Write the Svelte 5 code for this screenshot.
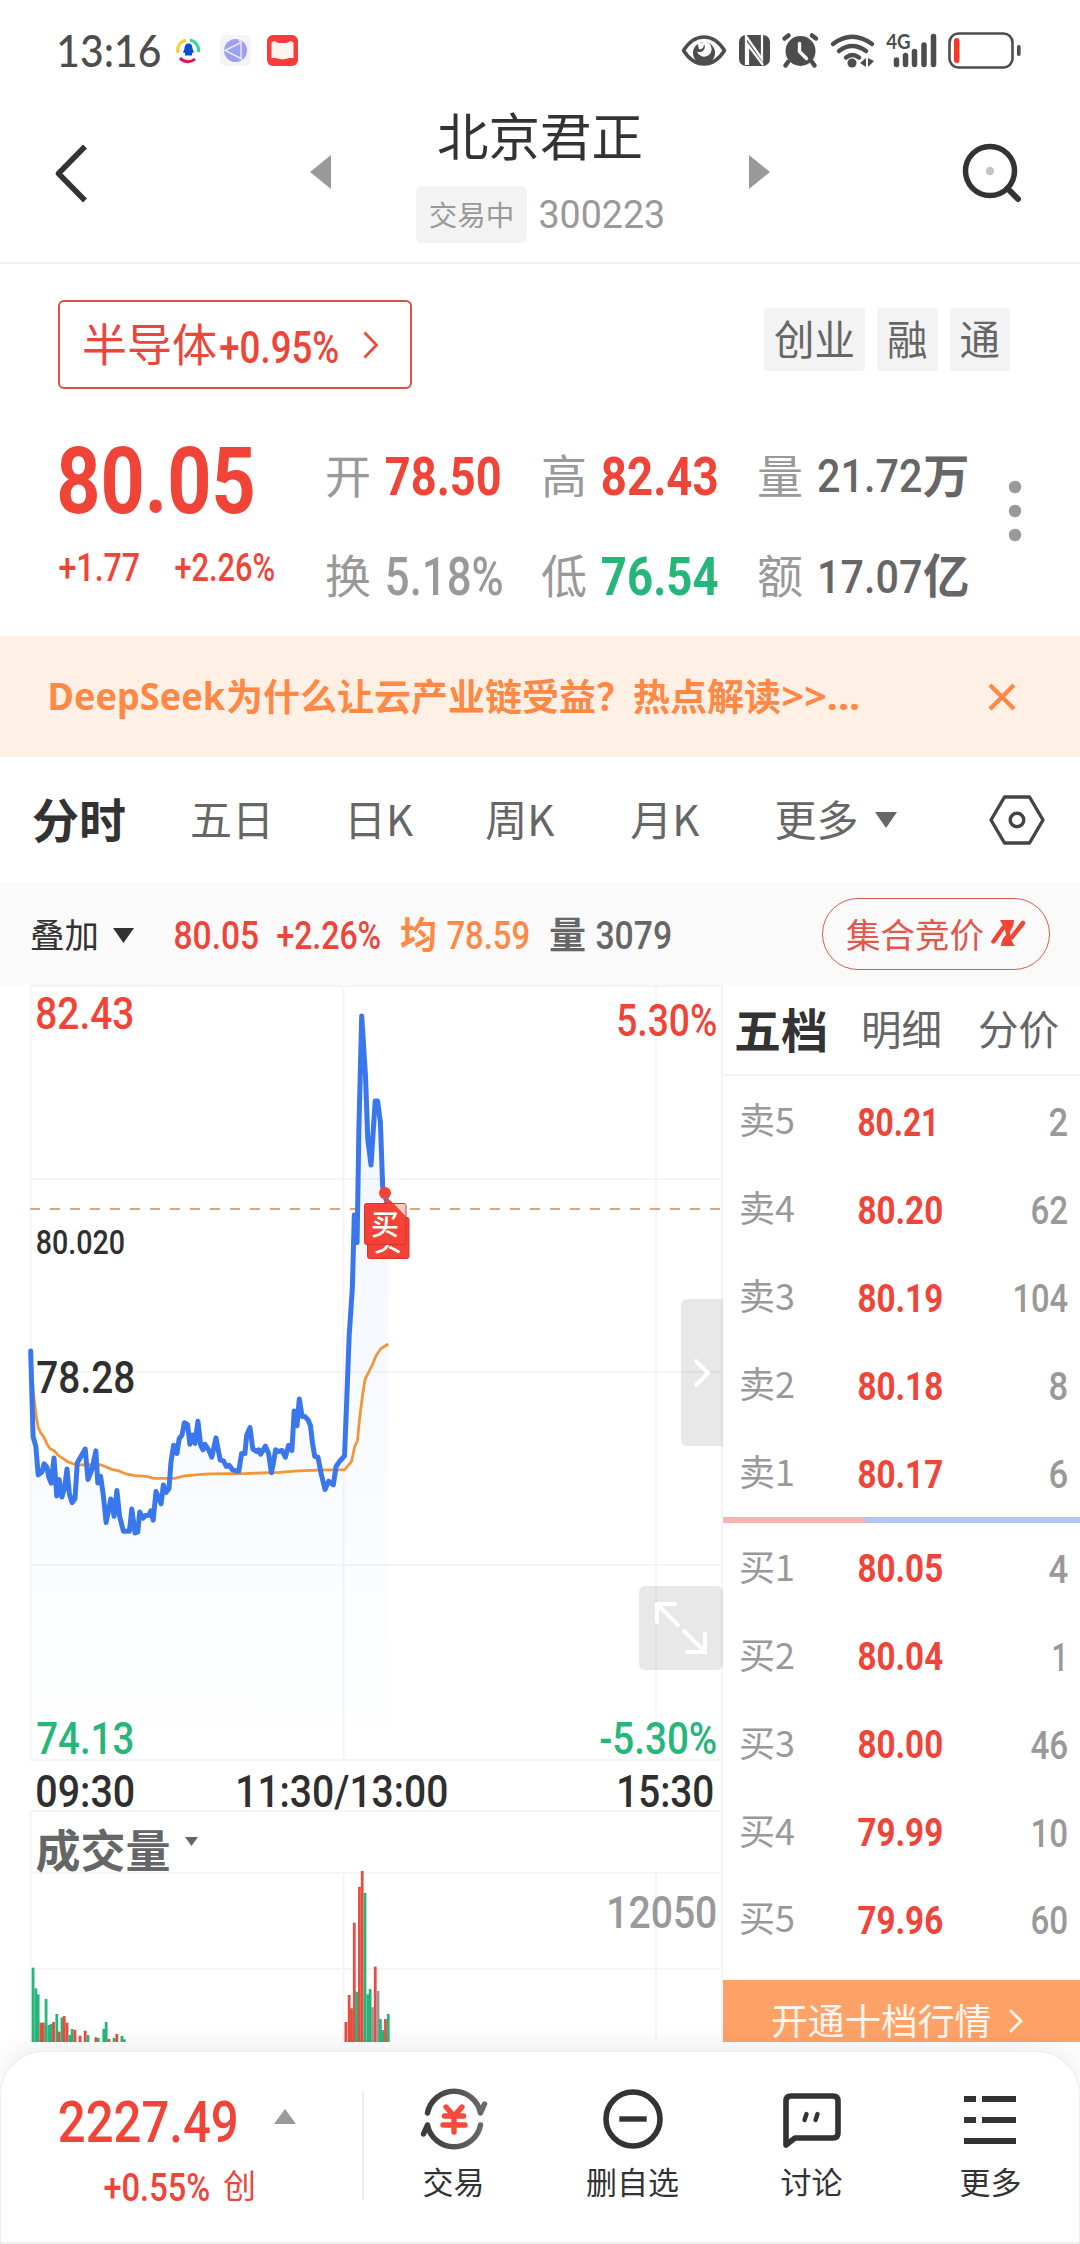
<!-- App.svelte: intraday quote screen -->
<script>
    const stats = [
        { label: '开', value: '78.50', unit: '', tone: 'up', bold: true, w: 113, h: 39 },
        { label: '高', value: '82.43', unit: '', tone: 'up', bold: true, w: 114, h: 39 },
        { label: '量', value: '21.72', unit: '万', tone: 'dark', bold: false, w: 102, h: 34 },
        { label: '换', value: '5.18%', unit: '', tone: 'muted', bold: false, w: 115, h: 39 },
        { label: '低', value: '76.54', unit: '', tone: 'down', bold: true, w: 114, h: 39 },
        { label: '额', value: '17.07', unit: '亿', tone: 'dark', bold: false, w: 102, h: 34 }
    ];

    const sells = [
        ['卖5', '80.21', '2'],
        ['卖4', '80.20', '62'],
        ['卖3', '80.19', '104'],
        ['卖2', '80.18', '8'],
        ['卖1', '80.17', '6']
    ];
    const buys = [
        ['买1', '80.05', '4'],
        ['买2', '80.04', '1'],
        ['买3', '80.00', '46'],
        ['买4', '79.99', '10'],
        ['买5', '79.96', '60']
    ];

    // minute samples: x and level pairs
    const priceRaw =
        '66,1003 71,1235 77,1260 82,1338 90,1330 95,1308 101,1318 105,1345 110,1360 116,1292 122,1395 127,1350 133,1398 139,1370 144,1322 149,1390 155,1413 161,1402 166,1305 173,1290 183,1268 189,1350 197,1325 206,1273 210,1360 216,1342 222,1395 228,1467 238,1403 245,1450 251,1380 257,1450 265,1490 278,1490 283,1430 290,1495 296,1492 300,1438 307,1455 312,1448 320,1447 324,1435 329,1460 335,1383 346,1416 351,1365 357,1385 363,1375 367,1305 373,1258 380,1280 385,1240 391,1230 396,1197 403,1202 408,1255 413,1230 419,1253 425,1193 431,1258 436,1270 440,1255 448,1270 455,1290 464,1238 473,1298 480,1300 486,1315 492,1312 500,1325 513,1328 519,1280 526,1280 530,1230 537,1210 543,1268 552,1275 556,1270 560,1282 570,1260 577,1280 583,1332 588,1300 592,1270 598,1275 606,1272 613,1290 620,1258 627,1272 632,1165 638,1205 643,1133 649,1180 655,1180 662,1190 667,1205 671,1250 676,1288 683,1290 690,1335 698,1377 706,1355 716,1365 722,1315 730,1300 740,1287 744,1160 750,960 757,830 761,635 767,710 771,400 777,97 785,260 790,430 797,500 806,327 811,327 817,385 822,560 828,590 834,605';
    const avgRaw =
        '70,1090 73,1130 78,1180 82,1210 88,1225 94,1235 101,1255 108,1268 116,1272 125,1285 135,1293 145,1302 157,1308 172,1311 215,1310 227,1316 240,1323 255,1327 270,1335 290,1340 315,1342 330,1347 375,1347 395,1341 420,1338 450,1335 530,1334 600,1331 640,1327 700,1324 740,1324 755,1302 762,1262 768,1245 772,1190 778,1130 784,1080 792,1060 800,1040 808,1015 818,997 834,984';

    // r = up, g = down, n = flat
    const volumeRaw =
        'g71,1253 g77,1315 g82,1333 r88,1418 r93,1418 g99,1347 g105,1425 g110,1422 r115,1416 g122,1392 r127,1445 g133,1402 r138,1398 r144,1418 g150,1455 g155,1437 r161,1440 r172,1457 r183,1442 g189,1455 r206,1462 g211,1464 g223,1437 g228,1416 r234,1467 g245,1464 r251,1452 g262,1458 g267,1468 r743,1416 r750,1335 r755,1375 r761,1118 g766,1325 r772,1011 r778,963 g784,1029 g790,1333 g795,1317 n800,1372 r806,1250 n812,1323 g817,1407 g822,1440 r828,1407 g834,1392';

    const SX = 2.148;

    function toPoints(raw) {
        return raw
            .split(' ')
            .map((pair) => {
                const [x, y] = pair.split(',').map(Number);
                return `${(x / SX).toFixed(1)},${(y / 2.7034 - 5).toFixed(1)}`;
            })
            .join(' ');
    }

    const pricePoints = toPoints(priceRaw);
    const avgPoints = toPoints(avgRaw);
    const areaPoints = `${pricePoints} 388,775 30.5,775`;

    const volumeBars = volumeRaw.split(' ').map((item) => {
        const [x, y] = item.slice(1).split(',').map(Number);
        return { kind: item[0], x: x / SX - 1.4, y: 565 + y / 3 };
    });
</script>

<!-- figures in a condensed face: w and h are the visible size of the string -->
{#snippet figure(text, x, y, w, h, cls)}
    {@const size = h / 0.725}
    <text class={cls} x={x - size * 0.04} {y} font-size={size} textLength={w + size * 0.07} lengthAdjust="spacingAndGlyphs">{text}</text>
{/snippet}

<!-- same, but x is the right edge -->
{#snippet figureEnd(text, x, y, w, h, cls)}
    {@const size = h / 0.725}
    <text class={cls} x={x + size * 0.03} {y} font-size={size} text-anchor="end" textLength={w + size * 0.07} lengthAdjust="spacingAndGlyphs">{text}</text>
{/snippet}

{#snippet num(text, w, h, cls)}
    <svg class="num" width={w} height={h}>{@render figure(text, 0, h - 0.5, w, h, cls)}</svg>
{/snippet}

{#snippet bookRow(row)}
    <div class="book-row">
        <span class="book-label">{row[0]}</span>
        {@render num(row[1], row[1].endsWith('1') ? 79 : 83, 28, 'up bold')}
        <span class="book-volume">{@render num(row[2], row[2] === '1' ? 14 : row[2].length * 18 - 1, 28, 'muted')}</span>
    </div>
{/snippet}

<div class="screen">
    <div class="status-bar">
        {@render num('13:16', 102, 32, 'clock')}
        <svg class="apps" width="128" height="40" viewBox="174 31 128 40">
            <g fill="none" stroke-width="3">
                <path d="M178 53a10.500 10.500 0 0 1 8-13" stroke="#f5cf3a" />
                <path d="M190 40a10.500 10.500 0 0 1 8.500 12" stroke="#3ecf9e" />
                <path d="M180 58a10.500 10.500 0 0 0 15 1" stroke="#e0124f" />
            </g>
            <path d="M188.500 43.500c3 0 4 2.500 4 5l1.500 4-2 .5v2.500h-7V53l-2-.5 1.500-4c0-2.500 1-5 4-5z" fill="#0a4fd0" />
            <rect x="220" y="35" width="31" height="31" rx="6" fill="#f4f4f6" />
            <circle cx="235.500" cy="50.500" r="11.500" fill="#9f9ff4" />
            <path d="M225 50.500l16-8v16zM241 42.500l-2-3M241 58.500l1 2" fill="none" stroke="#e9ecff" stroke-width="1.400" />
            <rect x="267" y="35" width="31" height="31" rx="6" fill="#fb3a3c" />
            <path d="M271.500 42.500l3-1.500 4 2h8l4-2 3 1.500v15.500h-4l-7 1.500-7-1.500h-4z" fill="#fff3ee" />
        </svg>
        <svg class="system" width="350" height="50" viewBox="678 26 350 50">
            <g fill="none" stroke="#4d4d4d" stroke-width="3.600" stroke-linecap="round" stroke-linejoin="round">
                <path d="M683.500 50.500Q692 37 704 37t20.500 13.500Q716 64 704 64t-20.500-13.500z" />
                <path d="M784.500 38.500l4-3M812 35.500l4 3M788 62l-2.500 3.500M812 62l2.500 3.500" stroke-width="4.500" />
                <path d="M833 44q19-14.500 39 0M839 51q13-10 27 0M846 57.500q6.500-5 13 0" stroke-width="4.500" />
                <path d="M896.500 60v4.500M905.500 55.500v9M914.500 51.500v13M924 45v19.500M933.500 36.500v28" stroke-width="5.500" />
            </g>
            <circle cx="704" cy="53" r="11" fill="#4d4d4d" />
            <path d="M702 42a7.500 7.500 0 1 1-5 9.500a5 5 0 0 0 5-9.500z" fill="#fff" />
            <path d="M699 49q5 1 5-6l-7-1z" fill="#fff" />
            <rect x="739" y="35" width="31" height="31" rx="7" fill="#4d4d4d" />
            <path d="M746 65V36l16 23V35M748 65V45l15 20" fill="none" stroke="#fff" stroke-width="2.200" />
            <circle cx="800.500" cy="51" r="15" fill="#4d4d4d" />
            <path d="M799.500 43.500v8l7 7" fill="none" stroke="#fff" stroke-width="3.400" stroke-linecap="round" stroke-linejoin="round" />
            <circle cx="852" cy="63" r="4.500" fill="#4d4d4d" />
            <path d="M860 63l6-5v9zM868 58v9l6-6z" fill="#4d4d4d" />
            {@render figure('4G', 887, 49, 23, 14.500, 'clock bold')}
            <rect x="949.500" y="33.500" width="63" height="34" rx="9" fill="none" stroke="#4d4d4d" stroke-width="2.600" />
            <rect x="954" y="38" width="5.500" height="25" rx="2.700" fill="#fb3525" />
            <rect x="1017" y="45" width="3.600" height="11" rx="1.800" fill="#4d4d4d" />
        </svg>
    </div>

    <header class="header">
        <svg class="back" width="36" height="62" viewBox="0 0 36 62">
            <path d="M32 4.500L5.500 31.500L32 58.500" fill="none" stroke="#333" stroke-width="5.500" stroke-linejoin="round" />
        </svg>
        <svg width="21" height="34" viewBox="0 0 21 34"><path d="M0 17L21 0V34z" fill="#999" /></svg>
        <div class="title">
            <h1>北京君正</h1>
            <div class="subtitle">
                <span class="state">交易中</span>
                {@render num('300223', 124, 28.5, 'muted thin')}
            </div>
        </div>
        <svg width="21" height="34" viewBox="0 0 21 34"><path d="M21 17L0 0V34z" fill="#999" /></svg>
        <svg class="search" width="62" height="62" viewBox="0 0 62 62">
            <circle cx="29" cy="29" r="24.500" fill="none" stroke="#333" stroke-width="5.500" />
            <circle cx="29" cy="29" r="4.200" fill="#c4c4c4" />
            <path d="M46.500 46.500L57 57" stroke="#333" stroke-width="6" stroke-linecap="round" />
        </svg>
    </header>

    <section class="quote">
        <div class="quote-top">
            <button class="sector">
                <span>半导体</span>
                {@render num('+0.95%', 117, 32, 'up')}
                <svg class="sector-arrow" width="16" height="28" viewBox="0 0 16 28"><path d="M1.500 1.500L13.500 14L1.500 26.500" fill="none" stroke="#ef4a3e" stroke-width="2.800" /></svg>
            </button>
            <div class="tags">
                <span>创业</span>
                <span>融</span>
                <span>通</span>
            </div>
        </div>
        <div class="quote-main">
            <div class="price">
                {@render num('80.05', 193, 67, 'up bold')}
                <div class="change">
                    {@render num('+1.77', 79, 28, 'up')}
                    {@render num('+2.26%', 98, 28, 'up')}
                </div>
            </div>
            <div class="stats">
                {#each stats as s}
                    <div class="stat">
                        <span class="stat-label">{s.label}</span>
                        {@render num(s.value, s.w, s.h, s.tone + (s.bold ? ' bold' : ''))}
                        {#if s.unit}<b class="stat-unit">{s.unit}</b>{/if}
                    </div>
                {/each}
            </div>
            <svg class="dots" width="14" height="62" viewBox="0 0 14 62" fill="#999">
                <circle cx="7" cy="7" r="6.200" />
                <circle cx="7" cy="31" r="6.200" />
                <circle cx="7" cy="55" r="6.200" />
            </svg>
        </div>
    </section>

    <div class="banner">
        {@render num('DeepSeek', 175, 27, 'latin')}
        <span class="banner-text">为什么让云产业链受益？热点解读</span>
        {@render num('>>...', 76, 27, 'latin')}
        <svg class="close" width="30" height="30" viewBox="0 0 30 30"><path d="M3 3L27 27M27 3L3 27" stroke="#ff8845" stroke-width="4.400" /></svg>
    </div>

    <nav class="tabs">
        <span class="tab active">分时</span>
        <span class="tab">五日</span>
        <span class="tab day">日K</span>
        <span class="tab week">周K</span>
        <span class="tab month">月K</span>
        <span class="tab more">更多</span>
        <svg width="22" height="16" viewBox="0 0 22 16"><path d="M0 0H22L11 16z" fill="#666" /></svg>
        <svg class="settings" width="56" height="50" viewBox="0 0 56 50" fill="none" stroke="#444" stroke-width="3.400" stroke-linejoin="round">
            <path d="M15.500 2H40.500L54 25L40.500 48H15.500L2 25z" />
            <circle cx="28" cy="25" r="6.800" />
        </svg>
    </nav>

    <div class="ticker">
        <span class="overlay">叠加</span>
        <svg class="overlay-arrow" width="21" height="15" viewBox="0 0 21 15"><path d="M0 0H21L10.500 15z" fill="#333" /></svg>
        {@render num('80.05', 83, 28.5, 'up')}
        {@render num('+2.26%', 102, 28.5, 'up')}
        <b class="avg">均</b>
        {@render num('78.59', 81, 28.5, 'avg-fill')}
        <b class="vol">量</b>
        {@render num('3079', 74, 28.5, 'dark')}
        <button class="auction">
            集合竞价
            <svg width="36" height="30" viewBox="0 0 36 30">
                <path d="M10 2H24Q24 8 20 13.500Q20 22 25 28H11Q11 22 16 17Q16 13 14 10z" fill="#f44336" />
                <path d="M3.500 23.500L13 10M33 5L22 19" stroke="#f44336" stroke-width="4.500" stroke-linecap="round" />
            </svg>
        </button>
    </div>

    <main class="content">
        <div class="chart">
            <svg width="723" height="1057" viewBox="0 0 723 1057">
                <defs>
                    <linearGradient id="area" x1="0" y1="0" x2="0" y2="1">
                        <stop offset="0" stop-color="#3b78f0" stop-opacity="0.080" />
                        <stop offset="0.600" stop-color="#3b78f0" stop-opacity="0.030" />
                        <stop offset="1" stop-color="#3b78f0" stop-opacity="0" />
                    </linearGradient>
                </defs>
                <g class="grid">
                    <path d="M30 1H722M30 194H722M30 387H722M30 580H722M30 775H722M30 826H722M30 888H722M30 984H722" />
                    <path d="M30.500 0V775M343.500 0V775M656 0V775M30.500 826V1057M343.500 888V1057M656 888V1057" />
                    <path d="M722 0V1057" />
                </g>

                <polygon points={areaPoints} fill="url(#area)" />
                <path d="M30 224H722" stroke="#dca77f" stroke-width="2" stroke-dasharray="10 10" />
                <polyline points={avgPoints} fill="none" stroke="#f2963c" stroke-width="2.800" stroke-linejoin="round" />
                <polyline points={pricePoints} fill="none" stroke="#3a76ec" stroke-width="5" stroke-linejoin="round" stroke-linecap="round" />

                <circle cx="385" cy="208" r="6" fill="#f44336" />
                <circle cx="388" cy="220" r="5" fill="#f44336" />
                <rect x="367.500" y="232.500" width="41.500" height="41" rx="2" fill="#f44336" stroke="#d5352b" />
                <text class="mark" x="374" y="266">买</text>
                <rect x="364.500" y="218.500" width="41.500" height="41" rx="2" fill="#f44336" stroke="#d5352b" />
                <path d="M394 219H405.500V231z" fill="#fbc9c4" />
                <text class="mark" x="371" y="250">买</text>

                {@render figure('82.43', 37, 43.5, 96, 31.5, 'up')}
                {@render figureEnd('5.30%', 716, 50.5, 98, 31.5, 'up')}
                {@render figure('80.020', 37, 269, 87, 24, 'ink')}
                {@render figure('78.28', 38, 408, 96, 31.5, 'ink')}
                {@render figure('74.13', 38, 769, 95, 31.5, 'down')}
                {@render figureEnd('-5.30%', 716, 769, 115, 31.5, 'down')}
                {@render figure('09:30', 37, 822, 97, 31.5, 'ink')}
                {@render figure('11:30/13:00', 237, 822, 210, 31.5, 'ink')}
                {@render figureEnd('15:30', 713, 822, 95, 31.5, 'ink')}
                <text class="indicator" x="35.500" y="883">成交量</text>
                <path d="M185 852H198L191.500 861z" fill="#666" />
                {@render figureEnd('12050', 716, 943, 108, 32, 'muted')}

                {#each volumeBars as bar}
                    <rect class={`bar-${bar.kind}`} x={bar.x} y={bar.y} width="2.800" height={1057 - bar.y} />
                {/each}
            </svg>
            <button class="drawer" aria-label="收起">
                <svg width="18" height="30" viewBox="0 0 18 30"><path d="M3 3L15 15L3 27" fill="none" stroke="#fff" stroke-width="4" stroke-linecap="round" stroke-linejoin="round" /></svg>
            </button>
            <button class="expand" aria-label="全屏">
                <svg width="54" height="54" viewBox="0 0 54 54" fill="none" stroke="#fff" stroke-width="4" stroke-linecap="round">
                    <path d="M3 21V3H21M3 3L24 24M51 33V51H33M51 51L30 30" />
                </svg>
            </button>
        </div>

        <aside class="book">
            <div class="book-tabs">
                <b>五档</b>
                <span>明细</span>
                <span>分价</span>
            </div>
            <div class="book-list">
                {#each sells as row}{@render bookRow(row)}{/each}
            </div>
            <div class="ratio"><i style:width="39.8%"></i></div>
            <div class="book-list buys">
                {#each buys as row}{@render bookRow(row)}{/each}
            </div>
            <div class="upgrade">
                开通十档行情
                <svg width="16" height="26" viewBox="0 0 16 26"><path d="M2 2L13 13L2 24" fill="none" stroke="#fff6ee" stroke-width="2.800" /></svg>
            </div>
        </aside>
    </main>

    <footer class="footer">
        <div class="index">
            <div class="index-value">
                {@render num('2227.49', 177, 41, 'up')}
                <svg width="22" height="15" viewBox="0 0 22 15"><path d="M0 15H22L11 0z" fill="#999" /></svg>
            </div>
            <div class="index-change">
                {@render num('+0.55%', 104, 28, 'up')}
                <span>创</span>
            </div>
        </div>
        <div class="action">
            <svg width="68" height="64" viewBox="-34 -32 68 64" fill="none" stroke-linecap="round" stroke-linejoin="round">
                <defs>
                    <linearGradient id="ring" gradientUnits="userSpaceOnUse" x1="-30" y1="0" x2="30" y2="0">
                        <stop offset="0" stop-color="#3a3a3a" />
                        <stop offset="1" stop-color="#6a6a6a" />
                    </linearGradient>
                </defs>
                <g stroke="url(#ring)" stroke-width="5.500">
                    <path d="M-26.500 -6A27 27 0 0 1 26.500 -6L30.500 -15" />
                    <path d="M26.500 6A27 27 0 0 1 -26.500 6L-30.500 15" />
                </g>
                <path d="M-8 -12L0 -3L8 -12M-9.500 -3H9.500M-11 6H11M0 -3V13" stroke="#f8493c" stroke-width="5.400" />
            </svg>
            <span>交易</span>
        </div>
        <div class="action">
            <svg width="68" height="64" viewBox="-34 -32 68 64" fill="none" stroke="#333" stroke-width="5.600">
                <circle r="27" />
                <path d="M-11 0H11" stroke-linecap="square" stroke-width="5.400" />
            </svg>
            <span>删自选</span>
        </div>
        <div class="action">
            <svg width="68" height="64" viewBox="-34 -32 68 64" fill="none" stroke="#333" stroke-width="5.600" stroke-linejoin="round" stroke-linecap="round">
                <path d="M-26 26V-18Q-26 -23 -21 -23H21Q26 -23 26 -18V14Q26 19 21 19H-17z" />
                <path d="M-5.500 -5L-7.500 1M5.500 -5L3.500 1" stroke-width="4.400" />
            </svg>
            <span>讨论</span>
        </div>
        <div class="action">
            <svg width="68" height="64" viewBox="-34 -32 68 64" stroke="#333" stroke-width="6">
                <path d="M-27 -20H-15M-9 -20H25M-27 1H-15M-9 1H25M-27 22H25" />
            </svg>
            <span>更多</span>
        </div>
    </footer>
</div>

<style>
    :global(body) {
        margin: 0;
        background: #fff;
    }

    .screen {
        width: 1080px;
        height: 2244px;
        display: flex;
        flex-direction: column;
        overflow: hidden;
        background: #fff;
        color: #333;
        font-family: 'Noto Sans CJK SC', sans-serif;
    }

    svg {
        display: block;
        flex: none;
    }

    span, b {
        white-space: nowrap;
    }

    button {
        font-family: inherit;
        padding: 0;
        margin: 0;
        background: none;
        border: none;
    }

    .num {
        overflow: visible;
    }

    text {
        font-family: Roboto, sans-serif;
        font-weight: 500;
    }

    .bold { font-weight: 700; }
    .thin { font-weight: 400; }
    .up { fill: #f04438; }
    .down { fill: #27b67a; }
    .muted { fill: #999; }
    .dark { fill: #666; }
    .ink { fill: #2f2f2f; }
    .avg-fill { fill: #ff8845; }

    .clock {
        fill: #4d4d4d;
        font-family: Lato, sans-serif;
    }

    .latin {
        fill: #ff8845;
        font-family: 'Noto Sans', sans-serif;
        font-weight: 700;
    }

    .status-bar {
        height: 102px;
        box-sizing: border-box;
        padding: 0 52px 1px 58px;
        display: flex;
        align-items: center;
        flex: none;
    }

    .apps {
        margin-left: 14px;
    }

    .system {
        margin-left: auto;
    }

    .header {
        height: 162px;
        box-sizing: border-box;
        border-bottom: 2px solid #f0f0f0;
        padding: 0 57px 0 53px;
        display: flex;
        flex: none;
    }

    .header > svg {
        margin-top: 53px;
    }

    .header > .back,
    .header > .search {
        margin-top: 40px;
    }

    .back {
        margin-right: 221px;
    }

    .search {
        margin-left: auto;
    }

    .title {
        width: 418px;
        display: flex;
        flex-direction: column;
        align-items: center;
    }

    h1 {
        margin: 0;
        padding-top: 2px;
        font-size: 51.5px;
        line-height: 60px;
        font-weight: 400;
    }

    .subtitle {
        display: flex;
        align-items: center;
        gap: 13px;
        margin-top: 22px;
    }

    .state {
        height: 57px;
        width: 111px;
        line-height: 55px;
        text-align: center;
        font-size: 28.5px;
        color: #999;
        background: #f3f3f3;
        border-radius: 6px;
    }

    .quote {
        height: 372px;
        flex: none;
        box-sizing: border-box;
        padding-top: 36px;
    }

    .quote-top {
        display: flex;
        justify-content: space-between;
        padding: 0 70px 0 58px;
    }

    .sector {
        width: 354px;
        height: 89px;
        box-sizing: border-box;
        border: 2px solid #dc4f44;
        border-radius: 6px;
        display: flex;
        align-items: center;
        padding-left: 22px;
        color: #ea463b;
        font-size: 45px;
        line-height: 58px;
    }

    .sector span {
        margin-top: -3px;
    }

    .sector .num {
        margin: 5px 0 0 4px;
    }

    .sector-arrow {
        margin-left: 25px;
    }

    .tags {
        display: flex;
        gap: 12px;
        padding-top: 8px;
    }

    .tags span {
        padding: 0 10px;
        height: 63px;
        line-height: 60px;
        font-size: 40.5px;
        color: #666;
        background: #f3f3f3;
        border-radius: 3px;
    }

    .quote-main {
        display: flex;
        padding-left: 60px;
        margin-top: 57px;
    }

    .price {
        width: 265px;
    }

    .change {
        display: flex;
        gap: 37px;
        margin-top: 40px;
    }

    .stats {
        display: grid;
        grid-template-columns: repeat(3, 216px);
        grid-auto-rows: 60px;
        row-gap: 40.5px;
        margin-top: -1px;
    }

    .stat {
        display: flex;
        align-items: center;
    }

    .stat-label {
        width: 62px;
        font-size: 46px;
        line-height: 60px;
        margin-top: -5px;
        color: #999;
    }

    .stat-unit {
        font-size: 46.5px;
        line-height: 60px;
        margin: -5px 0 0 2px;
        color: #666;
        font-weight: 700;
    }

    .dots {
        margin: 34px 0 0 35px;
    }

    .banner {
        height: 121px;
        flex: none;
        display: flex;
        align-items: center;
        padding-left: 49px;
        background: #fff0e6;
    }

    .banner-text {
        color: #ff8845;
        font-size: 37px;
        font-weight: 700;
        line-height: 60px;
        margin: -4px 2px 0;
    }

    .close {
        margin-left: auto;
        margin-right: 63px;
    }

    .tabs {
        height: 126px;
        flex: none;
        display: flex;
        align-items: center;
        padding-left: 32px;
    }

    .tab {
        font-size: 42px;
        line-height: 60px;
        color: #666;
        margin: -4px 0 0 69px;
    }

    .tab.active {
        margin-left: 0;
        font-size: 47px;
        font-weight: 700;
        color: #333;
        margin-right: -5px;
    }

    .tab.day {
        margin-left: 70px;
    }

    .tab.week {
        margin-left: 72px;
    }

    .tab.month {
        margin-left: 76px;
    }

    .tab.more {
        margin-right: 17px;
        margin-left: 75px;
    }

    .settings {
        margin-left: auto;
        margin-right: 35px;
    }

    .ticker {
        height: 102px;
        flex: none;
        display: flex;
        align-items: center;
        padding-left: 30px;
        background: #fafafa;
    }

    .overlay {
        font-size: 34.5px;
        line-height: 50px;
        margin-top: -3px;
    }

    .overlay-arrow {
        margin: 2px 41px 0 14px;
    }

    .ticker .num {
        margin-top: 3px;
    }

    .ticker .num + .num {
        margin-left: 20px;
    }

    .ticker b {
        font-size: 37px;
        line-height: 50px;
        margin: -2px 11px 0 20px;
    }

    .avg {
        color: #ff8845;
    }

    .vol {
        color: #666;
    }

    .auction {
        width: 228px;
        height: 72px;
        box-sizing: border-box;
        border: 1.5px solid #dc5a50;
        border-radius: 36px;
        margin-left: auto;
        margin-right: 30px;
        padding-bottom: 3px;
        display: flex;
        align-items: center;
        justify-content: center;
        gap: 6px;
        color: #e2564b;
        font-size: 34.500px;
        line-height: 60px;
    }

    .content {
        height: 1057px;
        flex: none;
        display: grid;
        grid-template-columns: 723px 357px;
        overflow: hidden;
    }

    .chart {
        position: relative;
    }

    .grid {
        fill: none;
        stroke: #f5f5f6;
        stroke-width: 2;
    }

    .mark,
    .indicator {
        font-family: 'Noto Sans CJK SC', sans-serif;
    }

    .mark {
        font-size: 28px;
        fill: #fff;
    }

    .indicator {
        font-size: 45px;
        font-weight: 700;
        fill: #666;
    }

    .bar-r { fill: #e94c41; }
    .bar-g { fill: #27b67a; }
    .bar-n { fill: #999; }

    .drawer,
    .expand {
        position: absolute;
        right: 0;
        display: flex;
        align-items: center;
        justify-content: center;
        background: rgba(0, 0, 0, 0.09);
    }

    .drawer {
        top: 314px;
        width: 42px;
        height: 147px;
        border-radius: 6px 0 0 6px;
    }

    .expand {
        top: 601px;
        width: 84px;
        height: 84px;
        border-radius: 6px;
    }

    .book {
        display: flex;
        flex-direction: column;
    }

    .book-tabs {
        height: 91px;
        box-sizing: border-box;
        border-bottom: 2px solid #f3f3f3;
        padding-left: 11px;
        display: flex;
        align-items: center;
        font-size: 40.5px;
        line-height: 60px;
        color: #666;
        flex: none;
    }

    .book-tabs b {
        font-size: 47px;
        color: #333;
        margin-top: -3px;
    }

    .book-tabs span {
        margin: -3px 0 0 33px;
    }

    .book-tabs span + span {
        margin-left: 36px;
    }

    .book-list {
        padding-top: 2px;
        flex: none;
    }

    .book-list.buys {
        padding-top: 1px;
    }

    .book-row {
        height: 87.9px;
        display: flex;
        align-items: center;
        padding: 0 13px 0 16px;
    }

    .book-label {
        width: 120px;
        font-size: 36px;
        line-height: 50px;
        color: #999;
        margin-top: -7px;
    }

    .book-volume {
        margin: 1px 0 0 auto;
    }

    .ratio {
        height: 6px;
        background: #afc6f5;
        flex: none;
    }

    .ratio i {
        display: block;
        height: 6px;
        background: #f8b4b0;
    }

    .upgrade {
        margin-top: 16px;
        height: 110px;
        flex: none;
        background: #ffa268;
        color: #fff6ee;
        font-size: 36.7px;
        line-height: 78px;
        padding-left: 48px;
        display: flex;
        gap: 17px;
    }

    .upgrade svg {
        margin-top: 28px;
    }

    .footer {
        position: relative;
        height: 193px;
        margin-top: 9px;
        box-sizing: border-box;
        flex: none;
        display: grid;
        grid-template-columns: 363px repeat(4, 179px);
        background: #fff;
        border: 1px solid #efefef;
        border-bottom: 2px solid #f0f0f0;
        border-radius: 44px 44px 0 0;
        box-shadow: 0 -6px 26px rgba(0, 0, 0, 0.07);
    }

    .index {
        height: 109px;
        margin-top: 39px;
        border-right: 2px solid #eee;
    }

    .index-value {
        display: flex;
        align-items: flex-start;
        padding: 10px 0 0 59px;
    }

    .index-value svg + svg {
        margin: 8px 0 0 37px;
    }

    .index-change {
        display: flex;
        align-items: center;
        gap: 14px;
        margin: 23px 0 0 104px;
        color: #ea463b;
        font-size: 33px;
        line-height: 50px;
    }

    .index-change span {
        margin-top: -6px;
    }

    .action {
        display: flex;
        flex-direction: column;
        align-items: center;
        padding-top: 35px;
    }

    .action span {
        font-size: 31px;
        line-height: 40px;
        margin-top: 10px;
        color: #333;
    }
</style>
